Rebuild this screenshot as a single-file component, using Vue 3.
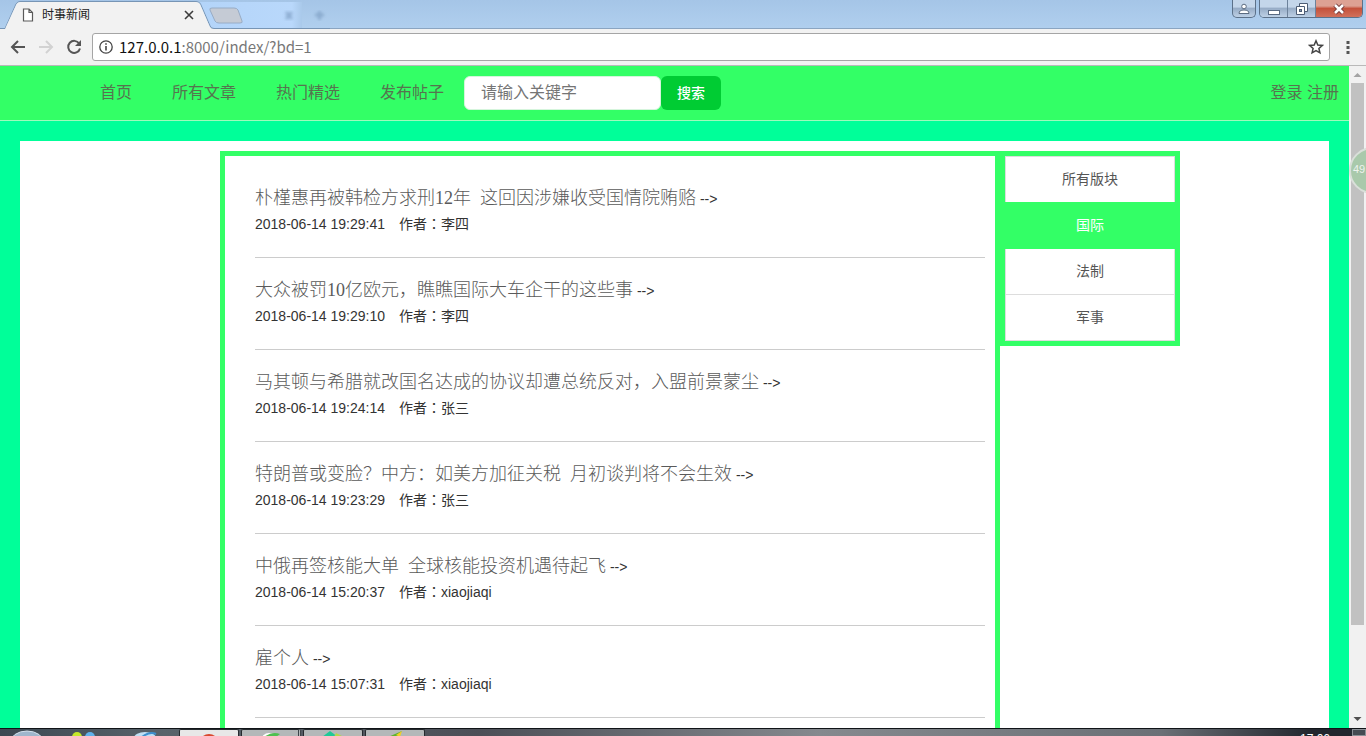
<script setup>
import { ref } from 'vue'

const keyword = ref('')
const navLinks = ['首页', '所有文章', '热门精选', '发布帖子']
const boards = ['所有版块', '国际', '法制', '军事']
const activeBoard = ref('国际')
const articles = [
  { title: '朴槿惠再被韩检方求刑12年  这回因涉嫌收受国情院贿赂', time: '2018-06-14 19:29:41', author: '李四' },
  { title: '大众被罚10亿欧元，瞧瞧国际大车企干的这些事', time: '2018-06-14 19:29:10', author: '李四' },
  { title: '马其顿与希腊就改国名达成的协议却遭总统反对，入盟前景蒙尘', time: '2018-06-14 19:24:14', author: '张三' },
  { title: '特朗普或变脸？中方：如美方加征关税  月初谈判将不会生效', time: '2018-06-14 19:23:29', author: '张三' },
  { title: '中俄再签核能大单  全球核能投资机遇待起飞', time: '2018-06-14 15:20:37', author: 'xiaojiaqi' },
  { title: '雇个人', time: '2018-06-14 15:07:31', author: 'xiaojiaqi' },
]
</script>

<template>
  <div class="screen">
    <header class="chrome">
      <div class="tabs">
        <svg class="tab-shape" width="330" height="29" viewBox="0 0 330 29" aria-hidden="true">
          <defs>
            <linearGradient id="tabfade" x1="0" x2="1" y1="0" y2="0">
              <stop offset="0" stop-color="#b3d4f9" />
              <stop offset="0.9" stop-color="#b9d8fb" />
              <stop offset="1" stop-color="#a9c9ea" />
            </linearGradient>
            <filter id="soft"><feGaussianBlur stdDeviation="1.500" /></filter>
          </defs>
          <path d="M200 2H302V28H212Z" fill="url(#tabfade)" />
          <path d="M0 28.500H5L16 4Q17.500 1.500 20 1.500H196Q199 1.500 200.500 4L210 26Q211 28.500 214 28.500H330" fill="none" stroke="#7795b5" />
          <path d="M0 29H5L16.500 4Q18 2 20 2H196Q198.500 2 200 4L209.500 26Q210.500 29 214 29Z" fill="#f2f2f2" />
          <path d="M212 8H234Q237 8 238 10L242 21Q243 23 240 23H219Q216 23 215 21L210 10Q209 8 212 8Z" fill="#c5cbd5" stroke="#98acc5" />
          <path d="M286 12L292 19M292 12L286 19M315 15H324M319.500 11V20" stroke="#7d9dc2" stroke-width="3" opacity=".7" filter="url(#soft)" />
        </svg>
        <div class="tab">
          <svg width="12" height="14" viewBox="0 0 12 14" aria-hidden="true"><path d="M1.500 1H7L10.500 4.500V13H1.500ZM7 1V4.500H10.500" fill="#fff" stroke="#5a5a5a" stroke-width="1.200" /></svg>
          <span class="tab-title">时事新闻</span>
          <button class="plain" aria-label="关闭标签页">
            <svg width="10" height="10" viewBox="0 0 10 10"><path d="M1 1L9 9M9 1L1 9" stroke="#3c3c3c" stroke-width="1.600" /></svg>
          </button>
        </div>
        <div class="window-buttons">
          <button class="win user" aria-label="用户"><svg width="12" height="12" viewBox="0 0 12 12"><circle cx="6" cy="3.500" r="2.300" fill="#fff" stroke="#5b6b80" /><path d="M1 10.500Q1 7 6 7T11 10.500Z" fill="#fff" stroke="#5b6b80" /></svg></button>
          <div class="win-group">
            <button class="win" aria-label="最小化"><svg width="14" height="12" viewBox="0 0 14 12"><rect x="1.500" y="7.500" width="11" height="4" fill="#fff" stroke="#596a82" /></svg></button>
            <button class="win" aria-label="还原"><svg width="14" height="14" viewBox="0 0 14 14"><path d="M4.500 1.500H12.500V9.500H4.500Z" fill="#fff" stroke="#4d5d75" /><path d="M1.500 4.500H9.500V12.500H1.500Z" fill="#fff" stroke="#4d5d75" /><rect x="4.500" y="7.500" width="2" height="2" fill="#8798b0" stroke="#4d5d75" /></svg></button>
            <button class="win close" aria-label="关闭"><svg width="14" height="12" viewBox="0 0 14 12"><path d="M3 2L11 10M11 2L3 10" stroke="#6d3434" stroke-width="4.500" /><path d="M3 2L11 10M11 2L3 10" stroke="#fff" stroke-width="2.600" /></svg></button>
          </div>
        </div>
      </div>
      <div class="toolbar">
        <button class="plain" aria-label="后退"><svg width="16" height="16" viewBox="0 0 16 16"><path d="M15 8H2M8 2L2 8L8 14" fill="none" stroke="#555" stroke-width="2" /></svg></button>
        <button class="plain" aria-label="前进"><svg width="16" height="16" viewBox="0 0 16 16"><path d="M1 8H14M8 2L14 8L8 14" fill="none" stroke="#d2d2d2" stroke-width="2" /></svg></button>
        <button class="plain" aria-label="刷新"><svg width="16" height="16" viewBox="0 0 16 16"><path d="M13.200 4.500A6 6 0 1 0 14 9.500" fill="none" stroke="#555" stroke-width="2" /><path d="M15 1V7H9Z" fill="#555" /></svg></button>
        <div class="address">
          <svg width="14" height="14" viewBox="0 0 14 14" aria-hidden="true"><circle cx="7" cy="7" r="6.200" fill="none" stroke="#444" stroke-width="1.300" /><path d="M7 6V10.500M7 3.200V4.800" stroke="#444" stroke-width="1.600" /></svg>
          <span class="url"><span class="host">127.0.0.1</span>:8000/index/?bd=1</span>
          <button class="plain" aria-label="收藏"><svg width="16" height="16" viewBox="0 0 16 16"><path d="M8 1.800L9.800 6L14.300 6.400L10.900 9.400L11.900 13.800L8 11.500L4.100 13.800L5.100 9.400L1.700 6.400L6.200 6Z" fill="none" stroke="#444" stroke-width="1.500" /></svg></button>
        </div>
        <button class="plain" aria-label="菜单"><svg width="4" height="16" viewBox="0 0 4 16"><path d="M.5 2H3.500V5H.5ZM.5 7H3.500V10H.5ZM.5 12H3.500V15H.5Z" fill="#555" /></svg></button>
      </div>
    </header>

    <div class="viewport">
      <div class="page">
        <nav class="navbar">
          <div class="links">
            <a v-for="link in navLinks" :key="link" href="#">{{ link }}</a>
          </div>
          <form class="search" @submit.prevent>
            <input v-model="keyword" type="text" placeholder="请输入关键字" aria-label="关键字">
            <button type="submit">搜索</button>
          </form>
          <div class="account"><a href="#">登录</a> <a href="#">注册</a></div>
        </nav>
        <main class="content">
          <section class="articles">
            <article v-for="item in articles" :key="item.title">
              <div class="headline"><a href="#">{{ item.title }}</a> --&gt;</div>
              <div class="meta"><span>{{ item.time }}</span><span>作者<span class="colon">：</span>{{ item.author }}</span></div>
            </article>
          </section>
          <aside class="boards">
            <a v-for="board in boards" :key="board" href="#" :class="{ active: board === activeBoard }" @click.prevent="activeBoard = board">{{ board }}</a>
          </aside>
        </main>
      </div>
      <div class="scrollbar" aria-hidden="true">
        <svg width="17" height="17" viewBox="0 0 17 17"><path d="M4.500 11L8.500 7L12.500 11Z" fill="#a3a3a3" /></svg>
        <div class="track"><div class="thumb"></div></div>
        <svg width="17" height="17" viewBox="0 0 17 17"><path d="M4.500 6L8.500 10L12.500 6Z" fill="#505050" /></svg>
      </div>
      <div class="badge">49</div>
    </div>

    <footer class="taskbar">
      <svg width="179" height="8" viewBox="0 0 179 8" aria-hidden="true">
        <ellipse cx="27" cy="14" rx="17" ry="12" fill="#9fb6cc" stroke="#d5e2ee" />
        <circle cx="77" cy="8" r="5" fill="#c6e82a" /><circle cx="90" cy="8" r="5" fill="#5fb2ec" />
        <ellipse cx="145" cy="9" rx="11" ry="6" fill="#bfe0f5" /><path d="M142 8Q150 2 156 5" stroke="#3d8fce" stroke-width="2" fill="none" />
      </svg>
      <span class="task light"><svg width="58" height="7" viewBox="0 0 58 7"><circle cx="29" cy="14" r="10" fill="#d8492f" /></svg></span>
      <span class="task stacked"><svg width="58" height="7" viewBox="0 0 58 7"><circle cx="27" cy="11" r="8" fill="#fff" /><path d="M22 7Q30 1 38 4L34 7Z" fill="#4fc04f" /></svg></span>
      <span class="task"><svg width="58" height="7" viewBox="0 0 58 7"><path d="M18 7L26 1L34 7Z" fill="#20c997" /><path d="M32 3L40 7H30Z" fill="#b5d84b" /></svg></span>
      <span class="task"><svg width="58" height="7" viewBox="0 0 58 7"><path d="M22 7L36 1L32 7Z" fill="#5cb32c" /><path d="M30 5L36 1L34 7Z" fill="#f2d027" /></svg></span>
      <span class="clock">17:06</span>
      <span class="desktop"></span>
    </footer>
  </div>
</template>

<style>
html, body { margin: 0; overflow: hidden; }
</style>

<style scoped>
* { box-sizing: border-box; }
.screen { height: 100vh; display: flex; flex-direction: column; overflow: hidden; font: 14px/20px "Liberation Sans", "Noto Sans CJK SC", sans-serif; color: #333; }
a { color: inherit; text-decoration: none; }
svg { display: block; flex: none; }
button { font-family: inherit; cursor: pointer; }
.plain { border: 0; padding: 0; background: none; }

.chrome { flex: none; }
.tabs { position: relative; height: 29px; background: linear-gradient(#a5c5e7, #b0cfee); border-bottom: 1px solid #8ba5c1; display: flex; justify-content: space-between; align-items: flex-start; }
.tab-shape { position: absolute; left: 0; top: 0; }
.tab { position: relative; display: flex; align-items: center; width: 194px; height: 29px; padding-left: 22px; }
.tab-title { flex: 1; margin-left: 8px; font-size: 12px; color: #222; }
.window-buttons { display: flex; gap: 3px; padding-right: 3px; }
.win-group { display: flex; border: 1px solid #5c7189; border-top: 0; border-radius: 0 0 5px 5px; overflow: hidden; }
.win { display: flex; align-items: center; justify-content: center; width: 28px; height: 17px; padding: 0; border: 0; border-right: 1px solid #6d829b; background: linear-gradient(#c4d6ea 40%, #98adc7 50%, #bdd0e5); }
.win.user { width: 24px; height: 18px; border: 1px solid #5c7189; border-top: 0; border-radius: 0 0 5px 5px; }
.win.close { width: 46px; border-right: 0; background: linear-gradient(#dda193 35%, #c4523c 50%, #d2705a); }
.toolbar { display: flex; align-items: center; gap: 12px; height: 37px; padding: 0 16px 0 10px; background: #f2f2f2; border-bottom: 1px solid #b9b9b9; }
.address { flex: 1; display: flex; align-items: center; height: 28px; margin-left: -2px; padding: 0 5px 0 6px; background: #fff; border: 1px solid #a5a5a5; border-radius: 3px; }
.address + .plain { margin-left: 4px; }
.url { flex: 1; margin-left: 6px; font: 15px/20px "Noto Sans CJK SC", sans-serif; color: #777; }
.host { color: #111; }

.viewport { flex: 1; min-height: 0; display: flex; position: relative; overflow: hidden; background: #00ff99; }
.page { flex: 1; display: flex; flex-direction: column; min-width: 0; }
.navbar { flex: none; display: flex; align-items: center; height: 55px; padding: 0 10px 0 100px; background: #33ff66; border-bottom: 1px solid #9dfabd; font-size: 16px; color: #56744f; }
.links { display: flex; gap: 40px; }
.search { display: flex; margin-left: 20px; }
.search input { width: 197px; height: 34px; padding: 0 16px; border: 1px solid #d5f5dc; border-radius: 6px; background: #fff; font: inherit; color: #555; }
.search input::placeholder { color: #757575; opacity: 1; }
.search button { width: 60px; height: 34px; padding: 0 0 2px; border: 0; border-radius: 6px; background: #00cc33; color: #fff; font-size: 14px; font-weight: 500; }
.account { margin-left: auto; }
.content { flex: 1; min-height: 0; display: flex; align-items: flex-start; margin: 20px 20px 0; padding: 10px 149px 0 200px; background: #fff; }
.articles { flex: 1; padding: 10px 10px 30px 30px; border: 5px solid #33ff66; }
article { height: 92px; padding-top: 19px; border-bottom: 1px solid #ccc; }
.headline { height: 27px; line-height: 26px; white-space: pre-wrap; }
.headline a { font-family: "Liberation Serif", "Noto Sans CJK SC", sans-serif; font-size: 18px; font-weight: 300; color: #5a5a5a; }
.meta { display: flex; gap: 14px; line-height: 24px; }
.colon { font-family: "Noto Sans CJK TC", sans-serif; line-height: 1; }
.boards { flex: none; width: 180px; border: 5px solid #33ff66; }
.boards a { display: block; height: 47px; border: 1px solid #ddd; line-height: 45px; text-align: center; color: #555; }
.boards a + a { margin-top: -1px; }
.boards a.active { position: relative; background: #33ff66; border-color: #33ff66; color: #fff; }

.scrollbar { flex: none; width: 17px; display: flex; flex-direction: column; background: #f1f1f1; }
.track { flex: 1; padding: 0 2px; }
.thumb { height: 86.3%; background: #c1c1c1; }
.badge { position: absolute; right: -30px; top: 81px; width: 47px; height: 47px; padding-left: 2px; border: 2px solid #d9dfd9; border-radius: 50%; background: #a9c9ab; color: #eef3ee; font-size: 11px; line-height: 41px; }

.taskbar { flex: none; display: flex; height: 8px; overflow: hidden; background: linear-gradient(90deg, #3c4852, #59636b 12%, #4c4f57 35%, #85898e 60%, #6b7076 85%, #22262e 96%); border-top: 1px solid #101418; }
.task { flex: none; width: 60px; height: 8px; margin-right: 2px; border: 1px solid #252a2e; border-bottom: 0; border-radius: 2px 2px 0 0; background: #b4b8b9; overflow: hidden; }
.task.light { background: #e8e8e8; }
.task.stacked { border-right: 3px double #3d4449; }
.clock { margin-left: auto; margin-right: 22px; padding-top: 4px; font-size: 12px; line-height: 12px; color: #fff; }
.desktop { width: 14px; border: 1px solid #8b9096; background: #454b53; }
</style>
